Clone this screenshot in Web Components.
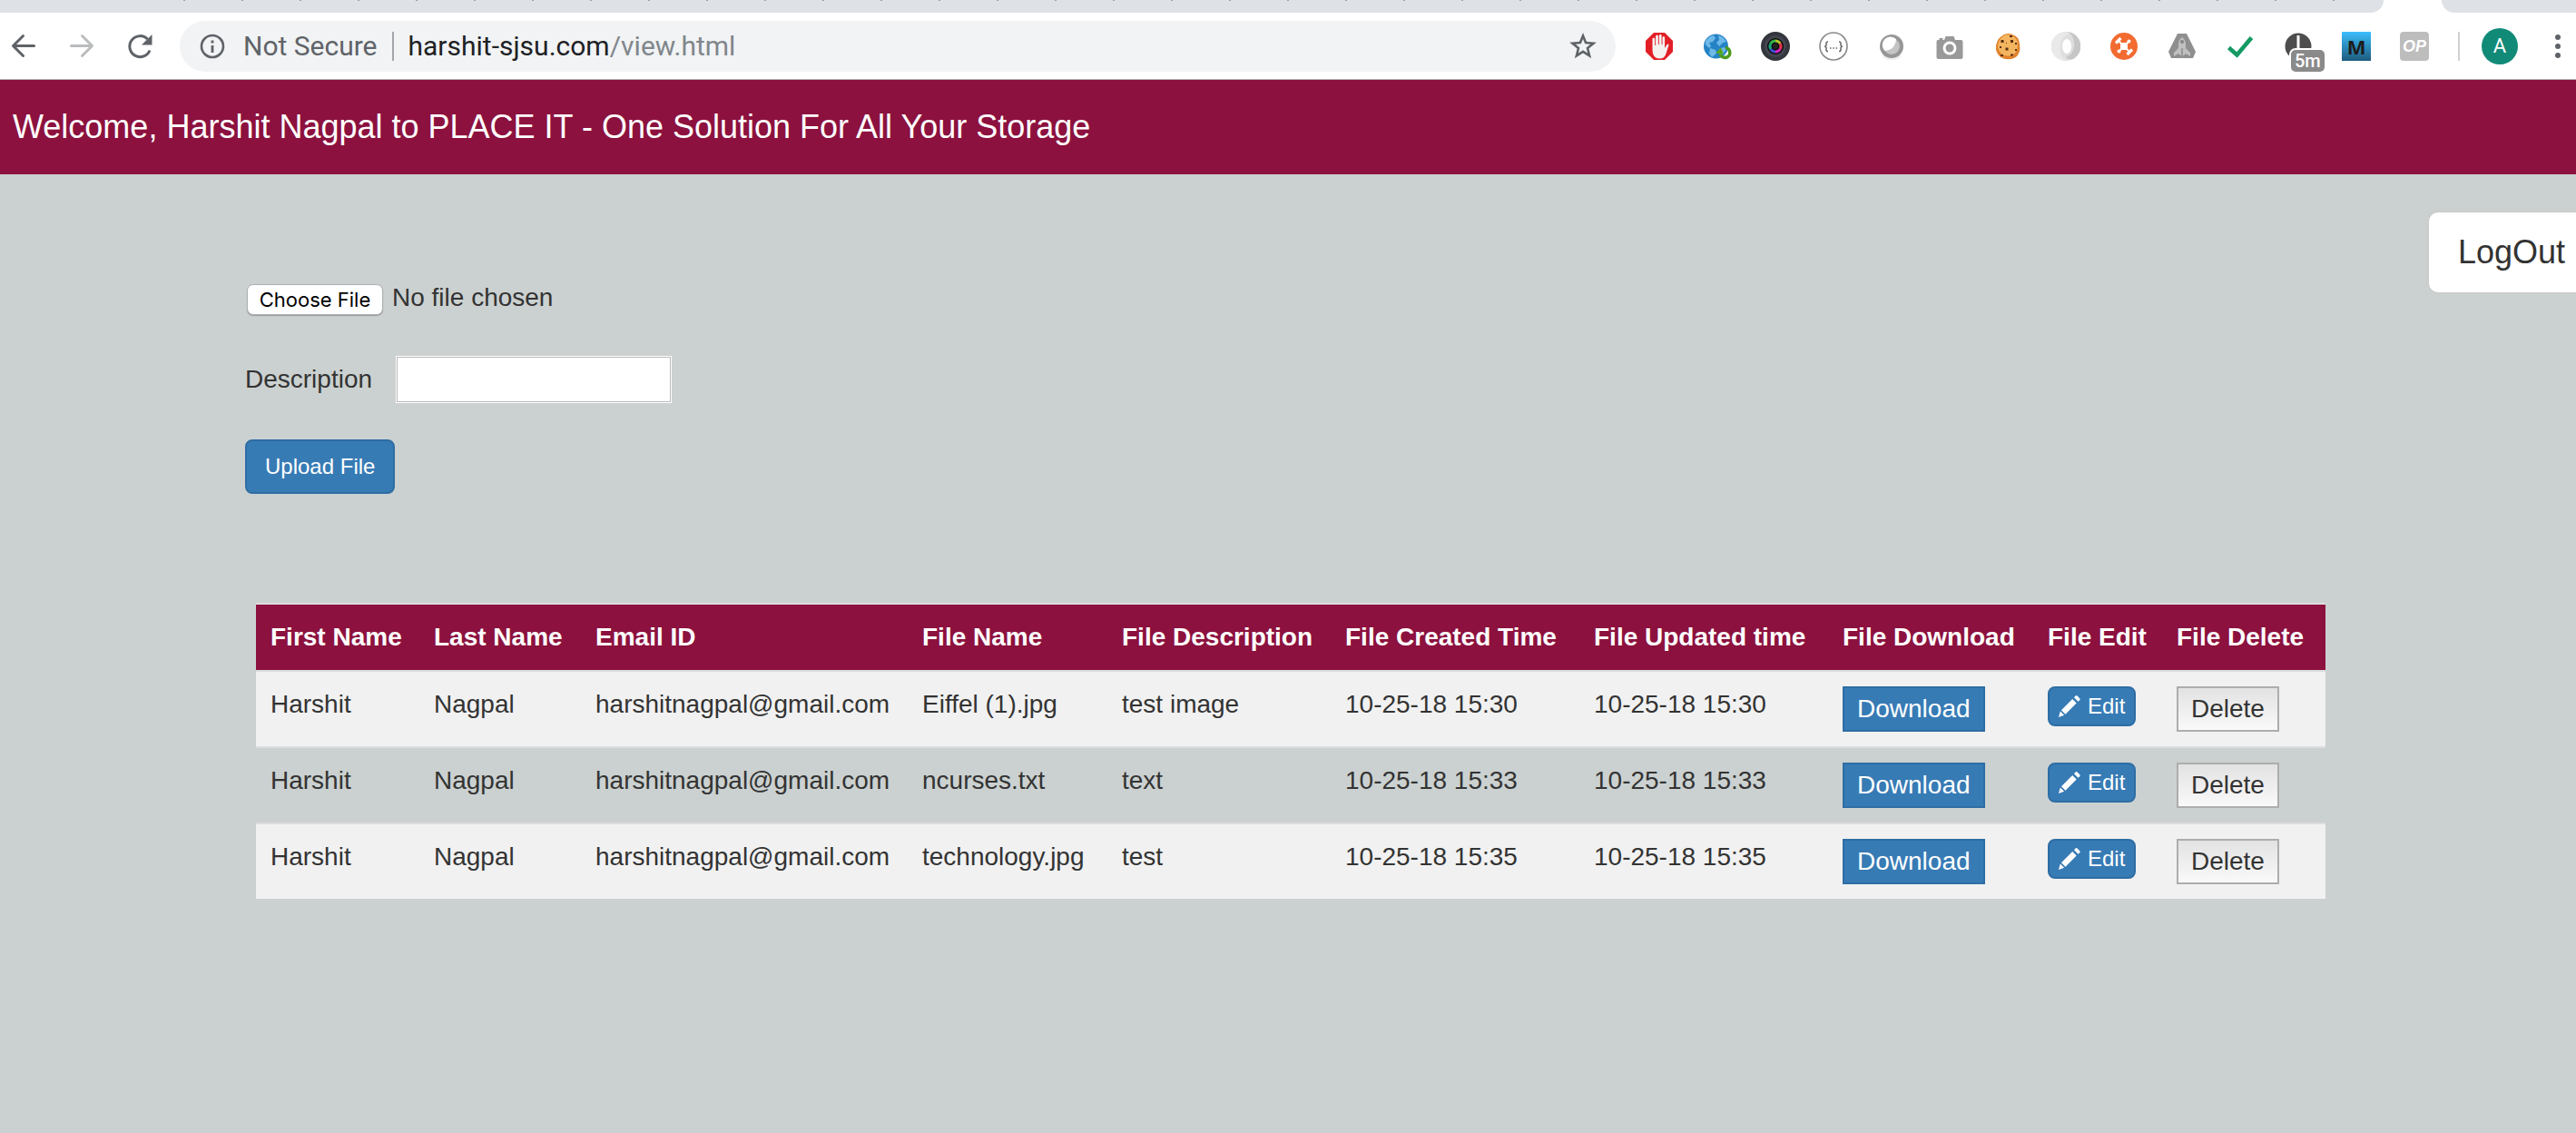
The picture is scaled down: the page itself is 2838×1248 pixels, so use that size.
<!DOCTYPE html>
<html lang="en">
<head>
<meta charset="utf-8">
<title>PLACE IT</title>
<style>
html, body { margin: 0; min-height: 100%; }
body { background: #cbd1d0; color: #333; font: 28px/40px "Liberation Sans", Arial, sans-serif; overflow-x: hidden; }
</style>
</head>
<body>
<browser-chrome>
  <ext-button label="Ad blocker"><svg viewBox="0 0 32 32"><path d="M10 1h12l9 9v12l-9 9H10l-9-9V10z" fill="#e21f26"/><path d="M8.500 20V8q0-1.600 1.300-1.600T11.200 8v7h.9V5.200q0-1.700 1.400-1.700t1.400 1.700V14h.9V4.500q0-1.700 1.400-1.700t1.400 1.700V14h.9V6.500q0-1.600 1.300-1.600t1.300 1.600V18l2.500-4q1.200-1.200 2 .2L23.500 24q-1.500 5.500-7 5.500-8 0-8-9.500z" fill="#f4f1ee"/></svg></ext-button>
  <ext-button label="Web translator"><svg viewBox="0 0 32 32"><circle cx="14.500" cy="16" r="13.500" fill="#2583c5"/><path d="M3 10l5-5 4-1 2 3-3 4-4 1 2 4-2 2-4-4zM17 4l5 2 4 5-4 1-4 4-3-4 3-3zM8 18l6 2 1 4-5 4-3-4zM18 19l5-2 3 2-4 6-3 2z" fill="#6fb9e8"/><path d="M25 17.500a5.500 5.500 0 1 1-6 7" fill="none" stroke="#4d9a1b" stroke-width="3.600"/><path d="M14 23.500l6-6 3 7z" fill="#5aa51f"/></svg></ext-button>
  <ext-button label="Lens"><svg viewBox="0 0 32 32"><circle cx="16" cy="16" r="16" fill="#33363d"/><circle cx="16" cy="16" r="12" fill="#42454d"/><circle cx="16" cy="16" r="9" fill="#0b0b0e"/><g fill="none" stroke-width="3"><path d="M16 10a6 6 0 0 1 5.200 3" stroke="#b0c42d"/><path d="M21.200 13a6 6 0 0 1 0 6" stroke="#e8354c"/><path d="M21.200 19A6 6 0 0 1 16 22" stroke="#d423c0"/><path d="M16 22a6 6 0 0 1-5.200-3" stroke="#3e4fd6"/><path d="M10.800 19a6 6 0 0 1 0-6" stroke="#1aa378"/><path d="M10.800 13A6 6 0 0 1 16 10" stroke="#37b44a"/></g><circle cx="16" cy="16" r="3" fill="#222"/></svg></ext-button>
  <ext-button label="JSON viewer"><svg viewBox="0 0 32 32" fill="none" stroke="#8a8a8a"><circle cx="16" cy="16" r="15" stroke-width="1.600"/><path d="M10 11q-2.500 0-2 2.500t-1.800 2.800q2.300.3 1.800 2.800t2 2.500M22 11q2.500 0 2 2.500t1.800 2.800q-2.300.3-1.800 2.800t-2 2.500" stroke="#666" stroke-width="1.500"/><path d="M12 18h1.500M15.300 18h1.500M18.600 18h1.500" stroke="#666" stroke-width="1.500"/></svg></ext-button>
  <ext-button label="Ring"><svg viewBox="0 0 32 32"><ellipse cx="16" cy="27" rx="10" ry="4" fill="#eee"/><circle cx="16" cy="16" r="13" fill="#969696"/><circle cx="16" cy="16" r="9" fill="#c4c4c4"/><path d="M21 8A9 9 0 1 0 8.500 21Q20 20 21 8z" fill="#fff"/></svg></ext-button>
  <ext-button label="Screen capture"><svg viewBox="0 0 32 32"><path d="M3 9q-1.500 0-1.500 2v17q0 2 2 2h25q2 0 2-2V11q0-2-2-2H22l-1.500-4h-9L10 9H8.500V7h-4v2z" fill="#999"/><circle cx="16" cy="18" r="7.500" fill="#fff"/><circle cx="16" cy="18" r="4.500" fill="#999"/></svg></ext-button>
  <ext-button label="Cookie editor"><svg viewBox="0 0 32 32"><path d="M12 3q5-2 9 0 7 2 8 10 2 12-6 16-8 3-15-1-6-5-5-13 2-9 9-12z" fill="#e0832c"/><path d="M12 4q5-2 8 0 7 3 7 10 0 10-7 12-12 3-15-9Q5 8 12 4z" fill="#f3b55f"/><g fill="#5a3014"><path d="M8.500 9h3v3h-3zM19 9h3v3h-3zM18 4h3v2h-3zM13.500 17.500h3v3h-3zM24 12h2v2h-2zM7 16h2v2H7zM24 19h2v2h-2zM8 25h3v2H8zM19 24.500h3v2h-3zM14 12h1v1h-1z"/></g></svg></ext-button>
  <ext-button label="Loop"><svg viewBox="0 0 32 32"><circle cx="16" cy="16" r="16" fill="#dedede"/><path d="M8 2A16 16 0 0 0 17 32Q9 28 10 16 11 4 20 2 14-1 8 2z" fill="#e9e9e9"/><path d="M24 30A16 16 0 0 0 18 0q8 5 7 16-1 9-9 12 3 3 8 2z" fill="#c6c6c6"/><ellipse cx="17" cy="16" rx="5" ry="8" fill="#fff"/></svg></ext-button>
  <ext-button label="Drone"><svg viewBox="0 0 32 32"><circle cx="16" cy="16" r="15" fill="#f26b31"/><path d="M10.500 10.500l11 11M21.500 10.500l-11 11" stroke="#fff" stroke-width="1.800"/><path d="M7 12.500L12.500 7M19.500 25L25 19.500" stroke="#fff" stroke-width="3.200"/><rect x="12" y="12" width="8" height="8" rx="2.500" fill="#fff"/><circle cx="21.500" cy="10.500" r="2" fill="#fff"/><circle cx="10.500" cy="21.500" r="2" fill="#fff"/></svg></ext-button>
  <ext-button label="Rocket"><svg viewBox="0 0 32 32"><path d="M11 2h10l10 20-3 7H4l-3-7z" fill="#8f8f8f"/><path d="M16 6q-4 3-4 8v4l-5 5v4l5-3 2 2h4l2-2 5 3v-4l-5-5v-4q0-5-4-8z" fill="#c0c0c0"/><circle cx="16" cy="11" r="2" fill="#858585"/><path d="M15 18h2v10h-2z" fill="#999"/></svg></ext-button>
  <ext-button label="Checker"><svg viewBox="0 0 32 32"><path d="M3.500 17.500l9 8L28.500 6.500" fill="none" stroke="#149a64" stroke-width="4.600"/></svg></ext-button>
  <ext-button label="Timer" badge="5m"><svg viewBox="0 0 32 32"><circle cx="16" cy="16" r="14.500" fill="#4d4d4d"/><path d="M16 4v15" stroke="#fff" stroke-width="3"/></svg></ext-button>
  <ext-button label="M" tone="blue"><span>M</span></ext-button>
  <ext-button label="OP" tone="grey"><span>OP</span></ext-button>
</browser-chrome>
<site-header>Welcome, Harshit Nagpal to PLACE IT - One Solution For All Your Storage</site-header>
<storage-page>
  <upload-form></upload-form>
  <action-button kind="logout" slot="account">LogOut</action-button>
  <file-table slot="files"></file-table>
</storage-page>

<script>
const define = (name, html, setup) => {
  const template = document.createElement("template");
  template.innerHTML = html;
  customElements.define(name, class extends HTMLElement {
    constructor() {
      super();
      this.attachShadow({ mode: "open" }).append(template.content.cloneNode(true));
    }
    connectedCallback() { if (setup) setup(this, this.shadowRoot); }
  });
};

define("ext-button", `
<style>
:host { display: flex; justify-content: center; width: 64px; }
button { position: relative; display: flex; align-items: center; justify-content: center; width: 32px; height: 32px; padding: 0; border: 0; background: none; color: #1c1c1c; font: 700 22px/30px "Open Sans", sans-serif; }
::slotted(svg) { width: 32px; height: 32px; flex: none; }
:host([tone=blue]) button { background: linear-gradient(#3bbffd, #1d5b7e); }
:host([tone=grey]) button { background: #bdbdbd; color: #fff; border-radius: 4px; font: italic 700 18px/32px "Liberation Sans", sans-serif; }
b { position: absolute; left: 8px; top: 20px; padding: 0 4px; background: #8a8a8a; color: #fff; border-radius: 5px; font: 500 20px/24px Roboto, sans-serif; box-shadow: 0 0 0 2px #fff; }
b:empty { display: none; }
</style>
<button type="button"><slot></slot><b></b></button>`,
(el, root) => {
  root.querySelector("button").setAttribute("aria-label", el.getAttribute("label"));
  root.querySelector("b").textContent = el.getAttribute("badge") || "";
});

define("browser-chrome", `
<style>
:host { display: block; background: #fff; border-bottom: 1px solid #b2b2b4; font: 30px/32px Roboto, sans-serif; }
.tabs { display: flex; gap: 64px; height: 14px; }
.strip { flex: 1; background: #dee1e6 repeating-linear-gradient(90deg, transparent 0 10px, #9aa0a6 10px 12px, transparent 12px 64px) 192px 0 / auto 1px no-repeat; border-bottom-right-radius: 14px; }
.rest { width: 148px; background: #dee1e6; border-bottom-left-radius: 14px; }
.bar { display: flex; align-items: center; height: 73px; padding-right: 4px; }
button { padding: 0; border: 0; background: none; display: flex; align-items: center; justify-content: center; }
.nav { width: 64px; flex: none; }
.nav:first-child { margin-left: -6px; }
.nav:nth-child(3) { margin-right: 12px; }
svg { width: 32px; height: 32px; flex: none; }
.address { flex: 1; display: flex; align-items: center; height: 56px; padding: 0 20px; margin-right: 16px; background: #f1f3f4; border-radius: 28px; color: #5f6368; }
.state { margin-left: 18px; }
.line { width: 2px; height: 32px; background: #a3a6aa; margin: 0 16px; }
.url { flex: 1; color: #202124; }
.url span { color: #80868b; }
.sep { width: 2px; height: 32px; background: #cfd1d4; margin: 0 24px 0 16px; }
.avatar { width: 40px; height: 40px; border-radius: 50%; background: #128a78; color: #fff; font: 22px/40px Roboto, sans-serif; }
.more { width: 32px; margin-left: 28px; }
</style>
<div class="tabs"><div class="strip"></div><div class="rest"></div></div>
<div class="bar">
  <button class="nav" type="button" aria-label="Back"><svg viewBox="0 0 32 32" fill="none" stroke="#5f6368" stroke-width="3" stroke-linecap="round" stroke-linejoin="round"><path d="M27.500 15.500H4.500M15.500 4.500L4.500 15.500l11 11"/></svg></button>
  <button class="nav" type="button" aria-label="Forward"><svg viewBox="0 0 32 32" fill="none" stroke="#babcbe" stroke-width="3" stroke-linecap="round" stroke-linejoin="round"><path d="M4.500 15.500h23M16.500 4.500l11 11-11 11"/></svg></button>
  <button class="nav" type="button" aria-label="Reload"><svg viewBox="0 0 32 32"><path d="M27 20.500A11.500 11.500 0 1 1 24.500 8" fill="none" stroke="#5f6368" stroke-width="3"/><path d="M29.500 3v11.500H18z" fill="#5f6368"/></svg></button>
  <div class="address">
    <svg viewBox="0 0 32 32"><circle cx="16" cy="16" r="12" fill="none" stroke="#5f6368" stroke-width="2.600"/><path d="M14.600 9.500h2.800v3h-2.800zM14.600 15h2.800v8h-2.800z" fill="#5f6368"/></svg>
    <span class="state">Not Secure</span><span class="line"></span>
    <span class="url">harshit-sjsu.com<span>/view.html</span></span>
    <button type="button" aria-label="Bookmark"><svg viewBox="0 0 32 32"><path d="M16 4.500l3.100 7.600 8.400.6-6.500 5.300 2.100 8.300-7.100-4.500-7.100 4.500 2.100-8.300-6.500-5.300 8.400-.6z" fill="none" stroke="#5f6368" stroke-width="2.600"/></svg></button>
  </div>
  <slot></slot>
  <span class="sep"></span>
  <button class="avatar" type="button">A</button>
  <button class="more" type="button" aria-label="Menu"><svg viewBox="0 0 32 32" fill="#5f6368"><circle cx="16" cy="6" r="3"/><circle cx="16" cy="16" r="3"/><circle cx="16" cy="26" r="3"/></svg></button>
</div>`);

define("site-header", `
<style>
:host { display: block; background: #8c113e; color: #fff; padding: 28px 14px; }
h1 { margin: 0; font-size: 36px; line-height: 48px; font-weight: 400; }
</style>
<h1><slot></slot></h1>`);

define("action-button", `
<style>
:host { display: block; }
button { box-sizing: border-box; display: flex; align-items: center; gap: 8px; height: 50px; padding: 0 14px; border: 2px solid #2e6da4; background: #377bb5; color: #fff; font: 28px/40px "Liberation Sans", Arial, sans-serif; white-space: nowrap; }
svg { display: none; width: 24px; height: 24px; }
:host([kind=upload]) button { height: 60px; padding: 0 20px; border-radius: 8px; font-size: 24px; }
:host([kind=edit]) button { height: 44px; padding: 0 10px; border-radius: 8px; font-size: 24px; }
:host([kind=edit]) svg { display: block; }
:host([kind=delete]) button { border-color: #adadad; background: linear-gradient(#e2e2e2, #f9f9f9); color: #333; }
:host([kind=logout]) button { height: 92px; padding: 0 32px; border-color: #ccc; border-radius: 12px; background: #fff; color: #333; font-size: 36px; }
</style>
<button type="button"><svg viewBox="0 0 24 24" fill="#fff"><path d="M0 24l1.800-6.600 4.300 4.300zM3 16.200L15.200 4l4.500 4.500L7.500 20.800zM17 2.200l1.600-1.600q1-1 2 0l2.600 2.600q1 1 0 2l-1.700 1.600z"/></svg><slot></slot></button>`);

define("upload-form", `
<style>
:host { display: block; padding-top: 116px; }
form { display: flex; flex-direction: column; align-items: flex-start; gap: 40px; }
input[type=file] { display: block; height: 44px; width: 600px; padding-left: 2px; color: #333; font: 28px/40px "Liberation Sans", Arial, sans-serif; }
input::file-selector-button { box-sizing: border-box; width: 150px; height: 34px; margin: 0 10px 0 0; padding: 0; border: 1px solid #aeb2b2; border-radius: 7px; background: #fff; color: #000; font: 22px/32px Inter, sans-serif; box-shadow: 0 1px 1px #999; vertical-align: middle; }
.field { display: flex; align-items: center; gap: 26px; }
input[type=text] { box-sizing: border-box; width: 304px; height: 52px; padding: 2px 6px; border: 1px solid #fff; outline: 1px solid #bbb; outline-offset: -2px; background: #fff; font: inherit; }
</style>
<form>
  <input type="file" aria-label="File">
  <div class="field"><label for="description">Description</label><input type="text" id="description"></div>
  <action-button kind="upload">Upload File</action-button>
</form>`);

define("file-table", `
<style>
:host { display: block; }
table { width: 100%; border-collapse: separate; border-spacing: 0; table-layout: fixed; }
th, td { padding: 16px; border-top: 2px solid #ddd; text-align: left; vertical-align: top; white-space: nowrap; }
th { background: #8c113e; color: #fff; }
td { height: 50px; }
tbody tr:nth-child(odd) { background: #f1f1f1; }
</style>
<table>
  <colgroup></colgroup>
  <thead><tr></tr></thead>
  <tbody></tbody>
</table>`,
(el, root) => {
  const columns = [["First Name", 180], ["Last Name", 178], ["Email ID", 360], ["File Name", 220], ["File Description", 246], ["File Created Time", 274], ["File Updated time", 274], ["File Download", 226], ["File Edit", 142], ["File Delete", 180]];
  const files = [["Eiffel (1).jpg", "test image", "10-25-18 15:30"], ["ncurses.txt", "text", "10-25-18 15:33"], ["technology.jpg", "test", "10-25-18 15:35"]];
  root.querySelector("colgroup").innerHTML = columns.map(([, width]) => `<col style="width:${width}px">`).join("");
  root.querySelector("thead tr").innerHTML = columns.map(([title]) => `<th scope="col">${title}</th>`).join("");
  root.querySelector("tbody").innerHTML = files.map(([name, text, time]) => "<tr>" + [
    "Harshit", "Nagpal", "harshitnagpal@gmail.com", name, text, time, time,
    '<action-button kind="download">Download</action-button>',
    '<action-button kind="edit">Edit</action-button>',
    '<action-button kind="delete">Delete</action-button>'
  ].map(cell => `<td>${cell}</td>`).join("") + "</tr>").join("");
});

define("storage-page", `
<style>
:host { display: block; overflow: hidden; }
.top { display: flex; justify-content: space-between; align-items: flex-start; padding-left: 270px; }
.account { margin: 40px -22px 0 0; }
.files { padding: 120px 276px 40px 282px; }
</style>
<div class="top"><slot></slot><div class="account"><slot name="account"></slot></div></div>
<div class="files"><slot name="files"></slot></div>`);
</script>
</body>
</html>
